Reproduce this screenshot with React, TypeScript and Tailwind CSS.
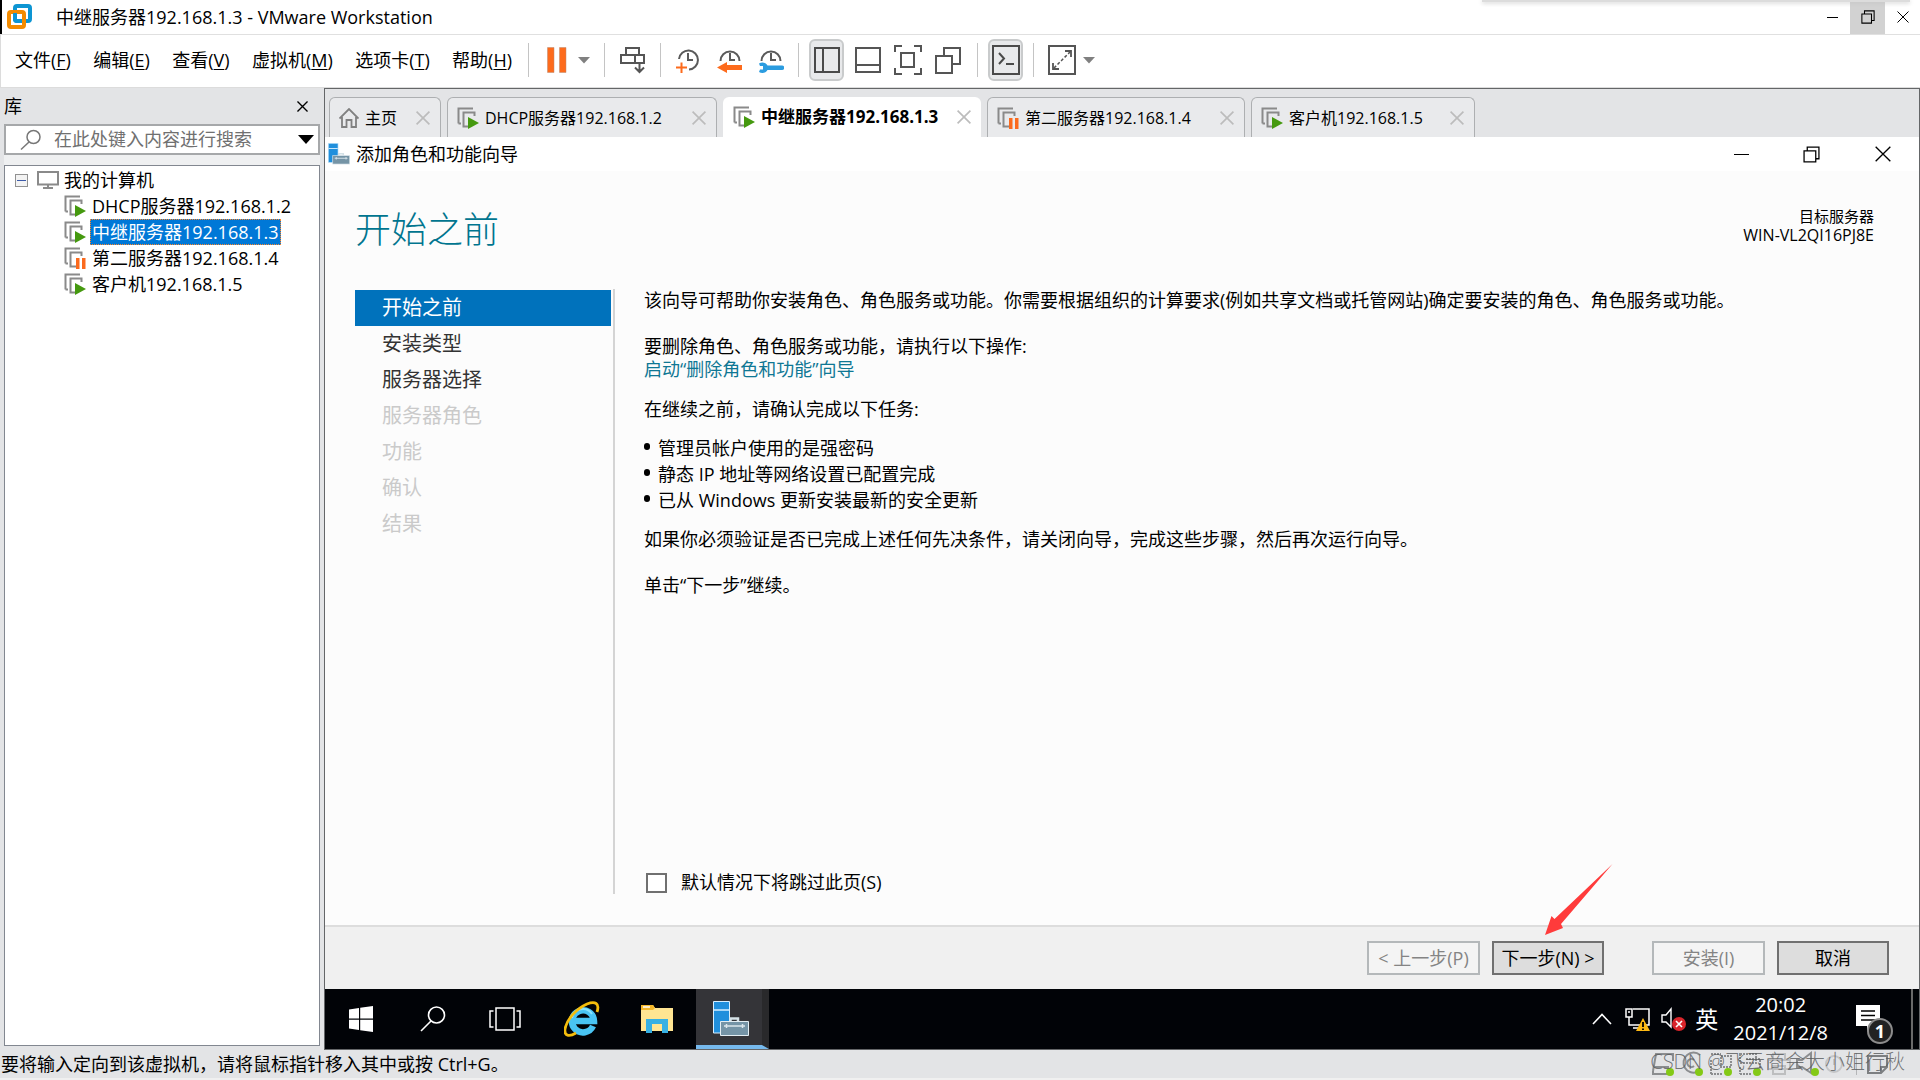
import React from "react";

type VmState = "run" | "pause";

function VmIcon({ state }: { state: VmState }) {
  return (
    <svg width="22" height="24" viewBox="0 0 22 24" fill="none" className="shrink-0">
      <path d="M1.500 17.500V2.500H16M1.500 17.500H4" stroke="#8a8a8a" strokeWidth="2" />
      <path d="M12 20.500H6.500V6.500H17.500V10" stroke="#8a8a8a" strokeWidth="2" />
      {state === "run" ? (
        <path d="M11 11L22 17L11 23Z" fill="#45990f" />
      ) : (
        <path d="M12 12H15.500V23H12ZM18 12H21.500V23H18Z" fill="#fb6a1d" />
      )}
    </svg>
  );
}

function ServerIcon({ size }: { size: number }) {
  return (
    <svg width={size} height={size} viewBox="0 0 36 36" className="shrink-0">
      <path d="M0.500 0.500H16.500V32H0.500Z" fill="#208fdc" stroke="#d8efff" />
      <path d="M1 9H16" stroke="#d8efff" strokeWidth="1.500" />
      <path d="M17.500 20V17.500H25V20" fill="none" stroke="#d5e2e8" strokeWidth="2.500" />
      <path d="M7.500 20.500H35.500V34.500H7.500Z" fill="#7594a6" stroke="#e3edf2" />
      <path d="M11 25H32M13.500 23V27M29.500 23V27" stroke="#dbe6ec" strokeWidth="1.500" />
    </svg>
  );
}

function Cross({ size, width = 1 }: { size: number; width?: number }) {
  return (
    <svg width={size} height={size} viewBox="0 0 12 12" fill="none" stroke="currentColor" strokeWidth={width}>
      <path d="M0.500 0.500L11.500 11.500M11.500 0.500L0.500 11.500" />
    </svg>
  );
}

function Restore({ size }: { size: number }) {
  return (
    <svg width={size} height={size} viewBox="0 0 16 16" fill="none" stroke="#000" strokeWidth="1.200">
      <path d="M1 4.500H12V15H1ZM4 4.500V1H15V12H12" />
    </svg>
  );
}

function Caret() {
  return (
    <svg width="12" height="8" viewBox="0 0 12 8">
      <path d="M0 1H12L6 7.500Z" fill="#808080" />
    </svg>
  );
}

function Clock({ children }: { children: React.ReactNode }) {
  return (
    <svg width="26" height="28" viewBox="0 0 26 28" fill="none">
      {children}
      <path d="M13 7V14H18" stroke="#5a5a5a" strokeWidth="2" />
    </svg>
  );
}

const menus = [
  ["文件", "F"],
  ["编辑", "E"],
  ["查看", "V"],
  ["虚拟机", "M"],
  ["选项卡", "T"],
  ["帮助", "H"],
];

const machines: { name: string; state: VmState; selected?: boolean }[] = [
  { name: "DHCP服务器192.168.1.2", state: "run" },
  { name: "中继服务器192.168.1.3", state: "run", selected: true },
  { name: "第二服务器192.168.1.4", state: "pause" },
  { name: "客户机192.168.1.5", state: "run" },
];

const tabs: { name: string; state?: VmState; active?: boolean; width: string }[] = [
  { name: "主页", width: "w-[112px]" },
  { name: "DHCP服务器192.168.1.2", state: "run", width: "w-[270px]" },
  { name: "中继服务器192.168.1.3", state: "run", active: true, width: "w-[258px]" },
  { name: "第二服务器192.168.1.4", state: "pause", width: "w-[258px]" },
  { name: "客户机192.168.1.5", state: "run", width: "w-[224px]" },
];

const steps = [
  { name: "开始之前", style: "bg-[#0072bc] text-white" },
  { name: "安装类型", style: "text-[#333333]" },
  { name: "服务器选择", style: "text-[#333333]" },
  { name: "服务器角色", style: "text-[#cacaca]", disabled: true },
  { name: "功能", style: "text-[#cacaca]", disabled: true },
  { name: "确认", style: "text-[#cacaca]", disabled: true },
  { name: "结果", style: "text-[#cacaca]", disabled: true },
];

function Separator() {
  return <div className="h-[34px] w-px bg-[#c4c4c4]" />;
}

function TitleBar() {
  return (
    <header className="relative flex h-[35px] items-center border-b border-[#e0e0e0] bg-white">
      <div className="h-full w-[2px] bg-black" />
      <svg width="26" height="26" viewBox="0 0 26 26" fill="none" className="ml-[5px]">
        <rect x="8" y="2" width="15" height="15" rx="2" stroke="#0d95d3" strokeWidth="4" />
        <rect x="2" y="8" width="15" height="15" rx="2" stroke="#f38b00" strokeWidth="4" />
        <path d="M8 9V15A2 2 0 0 0 10 17H15" stroke="#0d95d3" strokeWidth="4" />
      </svg>
      <h1 className="ml-[23px] flex-1 text-[18px]">中继服务器192.168.1.3 - VMware Workstation</h1>
      <button aria-label="最小化" className="flex h-full w-[36px] items-center justify-center">
        <span className="h-px w-[11px] bg-black" />
      </button>
      <button aria-label="还原" className="flex h-full w-[35px] items-center justify-center bg-[#d2d2d2]">
        <Restore size={14} />
      </button>
      <button aria-label="关闭" className="flex h-full w-[35px] items-center justify-center">
        <Cross size={12} />
      </button>
      <div className="absolute top-0 right-[10px] h-[2px] w-[428px] bg-[#dcdcdc] shadow-[0_1px_4px_#c0c0c0]" />
    </header>
  );
}

function Toolbar() {
  return (
    <div className="flex h-[53px] items-center border-b border-l border-[#dcdcdc] bg-white pb-[2px]">
      <nav className="flex w-[527px] items-center justify-between pr-[16px] pl-[14px]">
        {menus.map(([label, key]) => (
          <button key={key} className="text-[18px] whitespace-nowrap">
            {label}(<span className="underline underline-offset-2">{key}</span>)
          </button>
        ))}
      </nav>
      <Separator />
      <div className="flex w-[75px] items-center justify-between pr-[14px] pl-[18px]">
        <button aria-label="挂起">
          <svg width="20" height="26" viewBox="0 0 20 26">
            <path d="M0.500 0.500H7V25.500H0.500ZM12.500 0.500H19V25.500H12.500Z" fill="#fd6b1c" stroke="#b98a70" strokeWidth="0.500" />
          </svg>
        </button>
        <button aria-label="电源选项">
          <Caret />
        </button>
      </div>
      <Separator />
      <button aria-label="发送 Ctrl+Alt+Del" className="flex w-[55px] justify-center">
        <svg width="26" height="28" viewBox="0 0 26 28" fill="none" stroke="#555" strokeWidth="2">
          <path d="M6 2H19V9H6ZM1 9H24V17H1ZM15 9V17M19.500 17V26M15 21.500L19.500 26L24 21.500" />
        </svg>
      </button>
      <Separator />
      <div className="flex w-[137px] justify-between px-[14px]">
        <button aria-label="拍摄快照">
          <Clock>
            <path d="M4 13A9.500 9.500 0 1 1 14 23.500" stroke="#5a5a5a" strokeWidth="2" />
            <path d="M6.500 16.500V27M1 21.500H12" stroke="#fd6b1c" strokeWidth="2" />
          </Clock>
        </button>
        <button aria-label="恢复快照">
          <Clock>
            <path d="M3.500 15A9.500 9.500 0 1 1 22.500 15" stroke="#5a5a5a" strokeWidth="2" />
            <path d="M0 21.500L10 16V19H25V24H10V27Z" fill="#fd6b1c" />
          </Clock>
        </button>
        <button aria-label="管理快照">
          <Clock>
            <path d="M3.500 15A9.500 9.500 0 1 1 22.500 15" stroke="#5a5a5a" strokeWidth="2" />
            <path d="M1 17.500C4 15.500 8 16.500 9.500 19.500H24A2 2 0 0 1 24 24H9.500C8 27 4 28 1 26L2 23.500H5V20H2Z" fill="#2b9ce0" />
          </Clock>
        </button>
      </div>
      <Separator />
      <div className="flex w-[178px] items-center gap-[13px] pl-[10px]">
        <button aria-label="显示库" className="flex h-[42px] w-[35px] items-center justify-center rounded-md border-2 border-[#c9cbcc] bg-[#e8e9eb]">
          <svg width="26" height="28" viewBox="0 0 26 28" fill="none" stroke="#4a4a4a" strokeWidth="2">
            <path d="M1 2H25V26H1ZM9 2V26" />
          </svg>
        </button>
        <button aria-label="显示缩略图" className="-ml-[2px]">
          <svg width="26" height="28" viewBox="0 0 26 28" fill="none" stroke="#555" strokeWidth="2">
            <path d="M1 2H25V26H1ZM1 19H25" />
          </svg>
        </button>
        <button aria-label="全屏">
          <svg width="28" height="30" viewBox="0 0 28 30" fill="none" stroke="#555" strokeWidth="2">
            <path d="M7 8H20V22H7ZM1 7V1H8M20 1H27V7M27 23V29H20M8 29H1V23" />
          </svg>
        </button>
        <button aria-label="Unity">
          <svg width="26" height="28" viewBox="0 0 26 28" fill="none" stroke="#555" strokeWidth="2">
            <path d="M1 10H17V27H1ZM9 10V2H25V18H17" />
          </svg>
        </button>
      </div>
      <Separator />
      <button aria-label="控制台视图" className="mx-[10px] flex h-[42px] w-[35px] items-center justify-center rounded-md border-2 border-[#c9cbcc] bg-[#e8e9eb]">
        <svg width="28" height="30" viewBox="0 0 28 30" fill="none" stroke="#4a4a4a" strokeWidth="2">
          <path d="M1 1H27V29H1Z" />
          <path d="M7 8L12 13.500L7 19M14 19H22" />
        </svg>
      </button>
      <Separator />
      <button aria-label="自由拉伸" className="ml-[14px]">
        <svg width="28" height="30" viewBox="0 0 28 30" fill="none" stroke="#555" strokeWidth="2">
          <path d="M1 1H27V29H1Z" />
          <path d="M17 6H23V12M5 18V24H11" strokeWidth="1.800" />
          <path d="M6 23L22 7" strokeDasharray="3 2" strokeWidth="1.500" />
        </svg>
      </button>
      <button aria-label="拉伸选项" className="ml-[7px]">
        <Caret />
      </button>
    </div>
  );
}

function Library() {
  return (
    <aside className="flex w-[324px] shrink-0 flex-col pr-[4px] pb-[4px] pl-[4px]">
      <div className="flex h-[36px] items-center justify-between pr-[12px]">
        <h2 className="text-[18px]">库</h2>
        <button aria-label="关闭库">
          <Cross size={11} width={1.5} />
        </button>
      </div>
      <div className="flex h-[31px] items-center border-2 border-[#a6a8aa] bg-white pr-[4px] pl-[14px]">
        <svg width="22" height="22" viewBox="0 0 22 22" fill="none" stroke="#777" strokeWidth="1.500" className="shrink-0">
          <circle cx="13.500" cy="8" r="6.500" />
          <path d="M9 13L1 20.500" />
        </svg>
        <input aria-label="搜索" placeholder="在此处键入内容进行搜索" className="ml-[12px] w-full min-w-0 text-[18px] outline-none placeholder:text-[#707070]" />
        <button aria-label="搜索选项" className="shrink-0">
          <svg width="16" height="10" viewBox="0 0 16 10">
            <path d="M0 0H16L8 9Z" />
          </svg>
        </button>
      </div>
      <div className="h-[10px] bg-[#eff0f1]" />
      <div className="flex-1 border border-[#828790] bg-white pt-px">
        <div className="flex h-[26px] items-center pl-[10px]">
          <button aria-label="折叠" className="flex h-[13px] w-[13px] items-center justify-center border border-[#919191] bg-[#f3f3f3]">
            <span className="h-px w-[9px] bg-[#3c5aa8]" />
          </button>
          <svg width="22" height="18" viewBox="0 0 22 18" fill="none" stroke="#8a8a8a" strokeWidth="2" className="ml-[9px]">
            <path d="M1 1H21V13.500H1ZM11 14V17M6 17H16" />
          </svg>
          <span className="ml-[5px] text-[18px]">我的计算机</span>
        </div>
        <ul>
          {machines.map((m) => (
            <li key={m.name} className="flex h-[26px] items-center pl-[59px]">
              <VmIcon state={m.state} />
              <button
                className={
                  m.selected
                    ? "ml-[4px] h-[26px] border border-dotted border-[#ff8728] bg-[#0078d7] px-px text-[18px] leading-[24px] text-white"
                    : "ml-[4px] h-[26px] px-[2px] text-[18px] leading-[26px]"
                }
              >
                {m.name}
              </button>
            </li>
          ))}
        </ul>
      </div>
    </aside>
  );
}

function TabStrip() {
  return (
    <div className="flex h-[48px] items-end gap-[6px] pl-[4px]">
      {tabs.map((t) => (
        <div
          key={t.name}
          className={`flex h-[40px] items-center rounded-t-md pr-[10px] ${t.width} ${t.active ? "bg-white pl-[10px]" : "border border-b-0 border-[#adafb1] bg-[#e9eaec] pl-[9px]"}`}
        >
          {t.state ? (
            <VmIcon state={t.state} />
          ) : (
            <svg width="20" height="20" viewBox="0 0 20 20" fill="none" stroke="#808080" strokeWidth="1.800" className="shrink-0">
              <path d="M0.500 10.500L10 1L19.500 10.500M3 9V19H7.500V12H12.500V19H17V9" />
            </svg>
          )}
          <button className={`flex-1 text-left whitespace-nowrap ${t.active ? "pl-[6px] text-[17px] font-bold" : "pl-[6px] text-[16px]"}`}>{t.name}</button>
          <button aria-label={`关闭 ${t.name}`} className="text-[#bcbcbc]">
            <Cross size={14} width={1.4} />
          </button>
        </div>
      ))}
    </div>
  );
}

function Arrow() {
  return (
    <svg width="68" height="71" viewBox="0 0 68 71" className="pointer-events-none absolute top-[-77px] left-[53px]">
      <path d="M67.500 0L16 60L18 64L0 71L6.500 52L9.500 55Z" fill="#ff3b3b" />
    </svg>
  );
}

const enabledButton = "h-[34px] w-[112px] border-2 border-[#707070] bg-[#dddddd] text-[18px] leading-[28px] whitespace-nowrap text-black";
const disabledButton = "h-[34px] w-[113px] border-2 border-[#b4b8ba] bg-[#f4f4f4] text-[18px] leading-[28px] whitespace-nowrap text-[#848484]";

function Wizard() {
  return (
    <section className="flex flex-1 flex-col bg-[#fcfcfc]">
      <div className="flex h-[34px] items-center bg-white pl-[3px]">
        <ServerIcon size={22} />
        <h2 className="ml-[6px] flex-1 text-[18px]">添加角色和功能向导</h2>
        <button aria-label="最小化向导" className="flex w-[70px] justify-center">
          <span className="h-px w-[15px] bg-black" />
        </button>
        <button aria-label="还原向导" className="flex w-[70px] justify-center">
          <Restore size={17} />
        </button>
        <button aria-label="关闭向导" className="flex w-[73px] justify-center">
          <Cross size={16} />
        </button>
      </div>
      <div className="flex h-[118px] items-start justify-between pr-[45px] pl-[30px]">
        <h3 className="mt-[32px] text-[36px] leading-[54px] font-light text-[#00758f]">开始之前</h3>
        <p className="mt-[36px] text-right text-[15px] leading-[19px]">
          目标服务器
          <br />
          <span className="text-[16px]">WIN-VL2QI16PJ8E</span>
        </p>
      </div>
      <div className="flex flex-1 pb-[31px] pl-[30px]">
        <nav className="w-[260px] shrink-0 border-r-2 border-[#d4d4d4] pt-px pr-[2px]">
          {steps.map((s) => (
            <button key={s.name} disabled={s.disabled} className={`block h-[36px] w-full pl-[27px] text-left text-[20px] leading-[36px] ${s.style}`}>
              {s.name}
            </button>
          ))}
        </nav>
        <div className="flex flex-1 flex-col pl-[29px] text-[18px] leading-[23px]">
          <p>该向导可帮助你安装角色、角色服务或功能。你需要根据组织的计算要求(例如共享文档或托管网站)确定要安装的角色、角色服务或功能。</p>
          <p className="mt-[23px]">要删除角色、角色服务或功能，请执行以下操作:</p>
          <p>
            <a href="#remove" className="text-[#0f7794]">
              启动“删除角色和功能”向导
            </a>
          </p>
          <p className="mt-[17px]">在继续之前，请确认完成以下任务:</p>
          <ul className="mt-[14px] leading-[26px]">
            {["管理员帐户使用的是强密码", "静态 IP 地址等网络设置已配置完成", "已从 Windows 更新安装最新的安全更新"].map((t) => (
              <li key={t} className="flex items-center gap-[8px]">
                <span className="mb-[4px] h-[7px] w-[6px] rounded-full bg-black" />
                {t}
              </li>
            ))}
          </ul>
          <p className="mt-[15px]">如果你必须验证是否已完成上述任何先决条件，请关闭向导，完成这些步骤，然后再次运行向导。</p>
          <p className="mt-[23px]">单击“下一步”继续。</p>
          <label className="mt-auto flex items-center gap-[14px] pl-[2px]">
            <input type="checkbox" className="h-[20px] w-[21px] appearance-none border-2 border-[#707070] bg-white" />
            默认情况下将跳过此页(S)
          </label>
        </div>
      </div>
      <footer className="flex h-[64px] items-center justify-end border-t-2 border-[#dddddd] bg-[#f0f0f0] pr-[30px]">
        <button disabled className={disabledButton}>
          &lt; 上一步(P)
        </button>
        <div className="relative ml-[12px]">
          <button className={enabledButton}>下一步(N) &gt;</button>
          <Arrow />
        </div>
        <button disabled className={`ml-[48px] ${disabledButton}`}>
          安装(I)
        </button>
        <button className={`ml-[12px] ${enabledButton}`}>取消</button>
      </footer>
    </section>
  );
}

function Taskbar() {
  return (
    <div className="flex h-[60px] items-center bg-[#010307] text-white">
      <button aria-label="开始" className="flex w-[72px] justify-center">
        <svg width="24" height="26" viewBox="0 0 24 26" fill="#fff">
          <path d="M0 3.500L10 2V12.500H0ZM11.200 1.800L24 0V12.500H11.200ZM0 13.700H10V24L0 22.500ZM11.200 13.700H24V26L11.200 24.200Z" />
        </svg>
      </button>
      <button aria-label="搜索任务栏" className="flex w-[72px] justify-center">
        <svg width="26" height="26" viewBox="0 0 26 26" fill="none" stroke="#fff" strokeWidth="1.600">
          <circle cx="16.500" cy="9" r="8" />
          <path d="M11 15L1 25" />
        </svg>
      </button>
      <button aria-label="任务视图" className="flex w-[72px] justify-center">
        <svg width="32" height="24" viewBox="0 0 32 24" fill="none" stroke="#fff" strokeWidth="1.500">
          <path d="M7 1H25V23H7ZM4.500 4H1V20H4.500M27.500 4H31V20H27.500" />
        </svg>
      </button>
      <button aria-label="Internet Explorer" className="ml-[5px] flex w-[72px] justify-center">
        <svg width="36" height="36" viewBox="0 0 36 36" fill="none">
          <path d="M29 25A11 11 0 1 1 30 20H11" stroke="#49c4f3" strokeWidth="6.500" />
          <path d="M8 17A11 11 0 0 1 28 13" stroke="#8be3fd" strokeWidth="2" />
          <path d="M33 11C36 2 31 0 23 3C12 8 3 18 1 28C0 35 5 36 12 32" stroke="#f4bd0c" strokeWidth="2.800" />
        </svg>
      </button>
      <button aria-label="文件资源管理器" className="flex w-[78px] justify-center">
        <svg width="34" height="30" viewBox="0 0 34 30">
          <path d="M1 1H13L15 4H33V27H1Z" fill="#ffe592" />
          <path d="M1 1H13L15 4L13 6H1Z" fill="#f6b92b" />
          <path d="M3 3H10" stroke="#fff" strokeWidth="1.500" />
          <path d="M6 29V15H28V29H22V20H12V29Z" fill="#36b0e3" />
        </svg>
      </button>
      <button aria-label="服务器管理器" className="flex h-full w-[73px] items-center justify-center border-r-[7px] border-b-[4px] border-r-[#29292b] border-b-[#76b9ed] bg-[#343438] pt-[4px] pl-[4px]">
        <ServerIcon size={36} />
      </button>
      <div className="flex-1" />
      <button aria-label="显示隐藏的图标">
        <svg width="20" height="12" viewBox="0 0 20 12" fill="none" stroke="#fff" strokeWidth="1.600">
          <path d="M1 11L10 1.500L19 11" />
        </svg>
      </button>
      <svg width="26" height="26" viewBox="0 0 26 26" fill="none" stroke="#fff" strokeWidth="1.500" className="ml-[13px]">
        <path d="M8 3H24V19H4V11M1 3H7V11H1ZM3 6H5M8 22H14" />
        <path d="M18 12L25 25H11Z" fill="#fdb913" stroke="none" />
        <path d="M18 16V21M18 22.500V24" stroke="#000" strokeWidth="1.800" />
      </svg>
      <svg width="26" height="26" viewBox="0 0 26 26" fill="none" className="ml-[10px]">
        <path d="M1 9H5L10 3V21L5 16H1Z" stroke="#fff" strokeWidth="1.400" />
        <circle cx="18" cy="18" r="7" fill="#d9252b" />
        <path d="M15 15L21 21M21 15L15 21" stroke="#fff" strokeWidth="1.600" />
      </svg>
      <button className="ml-[8px] text-[23px] leading-[30px]">英</button>
      <time className="ml-[15px] text-center text-[20px] leading-[28px]">
        20:02
        <br />
        2021/12/8
      </time>
      <button aria-label="1 个新通知" className="relative ml-[28px]">
        <svg width="26" height="28" viewBox="0 0 26 28">
          <path d="M0 0H24V21H17L11 27V21H0Z" fill="#fff" />
          <path d="M5 6H19M5 10.500H19M5 15H19" stroke="#000" strokeWidth="1.500" />
        </svg>
        <span className="absolute top-[13px] left-[11px] flex h-[26px] w-[26px] items-center justify-center rounded-full border-2 border-[#8c8c8c] bg-[#222] text-[18px] leading-none font-bold">1</span>
      </button>
      <div className="ml-[29px] h-full w-[2px] bg-[#6a6a6a]" />
      <div className="h-full w-[6px]" />
    </div>
  );
}

const devicePaths = [
  "M2 20L5 3H22V10M2 20V23H17M3 16H18",
  "M20 4A10 10 0 1 0 17 21M14 9A4 4 0 1 0 14 15",
  "M2 3H12M2 23V8M2 23H14M12 5H22V16H12Z",
  "M2 3H18V12H2ZM2 23H14M2 16V23M8 8H22V17",
  "M6 3H18V9H6ZM1 9H23V18H1ZM6 15H18V23H6Z",
  "M1 9H6L15 2V22L6 16H1Z",
];

function StatusBar() {
  return (
    <footer className="relative flex h-[30px] items-center justify-between border-b-2 border-[#f0f0f0] bg-[#e3e4e6] pl-px">
      <p className="text-[18px] leading-[28px]">要将输入定向到该虚拟机，请将鼠标指针移入其中或按 Ctrl+G。</p>
      <div className="flex items-center gap-[5px] pr-[30px]">
        {devicePaths.map((d, i) => (
          <svg key={d} width="24" height="26" viewBox="0 0 24 26" fill="none" stroke={i === 4 ? "#bdbebf" : "#8b8d8f"} strokeWidth="2">
            <path d={d} strokeDasharray={i === 2 || i === 3 ? "2 1" : undefined} />
            {i !== 4 && <circle cx="19" cy="21" r="4" fill="#84c916" stroke="none" />}
          </svg>
        ))}
        <svg width="24" height="26" viewBox="0 0 24 26" fill="none" stroke="#c4c5c7" strokeWidth="2">
          <circle cx="9" cy="13" r="8" />
          <path d="M9 8V14" />
        </svg>
        <div className="ml-[2px] h-[22px] w-px bg-[#b4b5b7]" />
        <svg width="24" height="26" viewBox="0 0 24 26" fill="none" stroke="#7d7f81" strokeWidth="2" className="ml-[4px]">
          <path d="M2 5H21V16L15 22H2ZM15 22V16H21" />
        </svg>
      </div>
      <p className="absolute top-[-3px] right-[15px] text-[20px] leading-[30px] font-light whitespace-nowrap text-[#55585a]/80">CSDN @飞云商会大小姐行秋</p>
    </footer>
  );
}

export default function App() {
  return (
    <div className="flex min-h-screen flex-col overflow-hidden bg-[#e3e4e6] font-['Open_Sans','Noto_Sans_CJK_SC',sans-serif] text-black">
      <TitleBar />
      <Toolbar />
      <div className="flex flex-1">
        <Library />
        <main className="flex flex-1 flex-col border border-[#646668]">
          <TabStrip />
          <Wizard />
          <Taskbar />
        </main>
      </div>
      <StatusBar />
    </div>
  );
}
